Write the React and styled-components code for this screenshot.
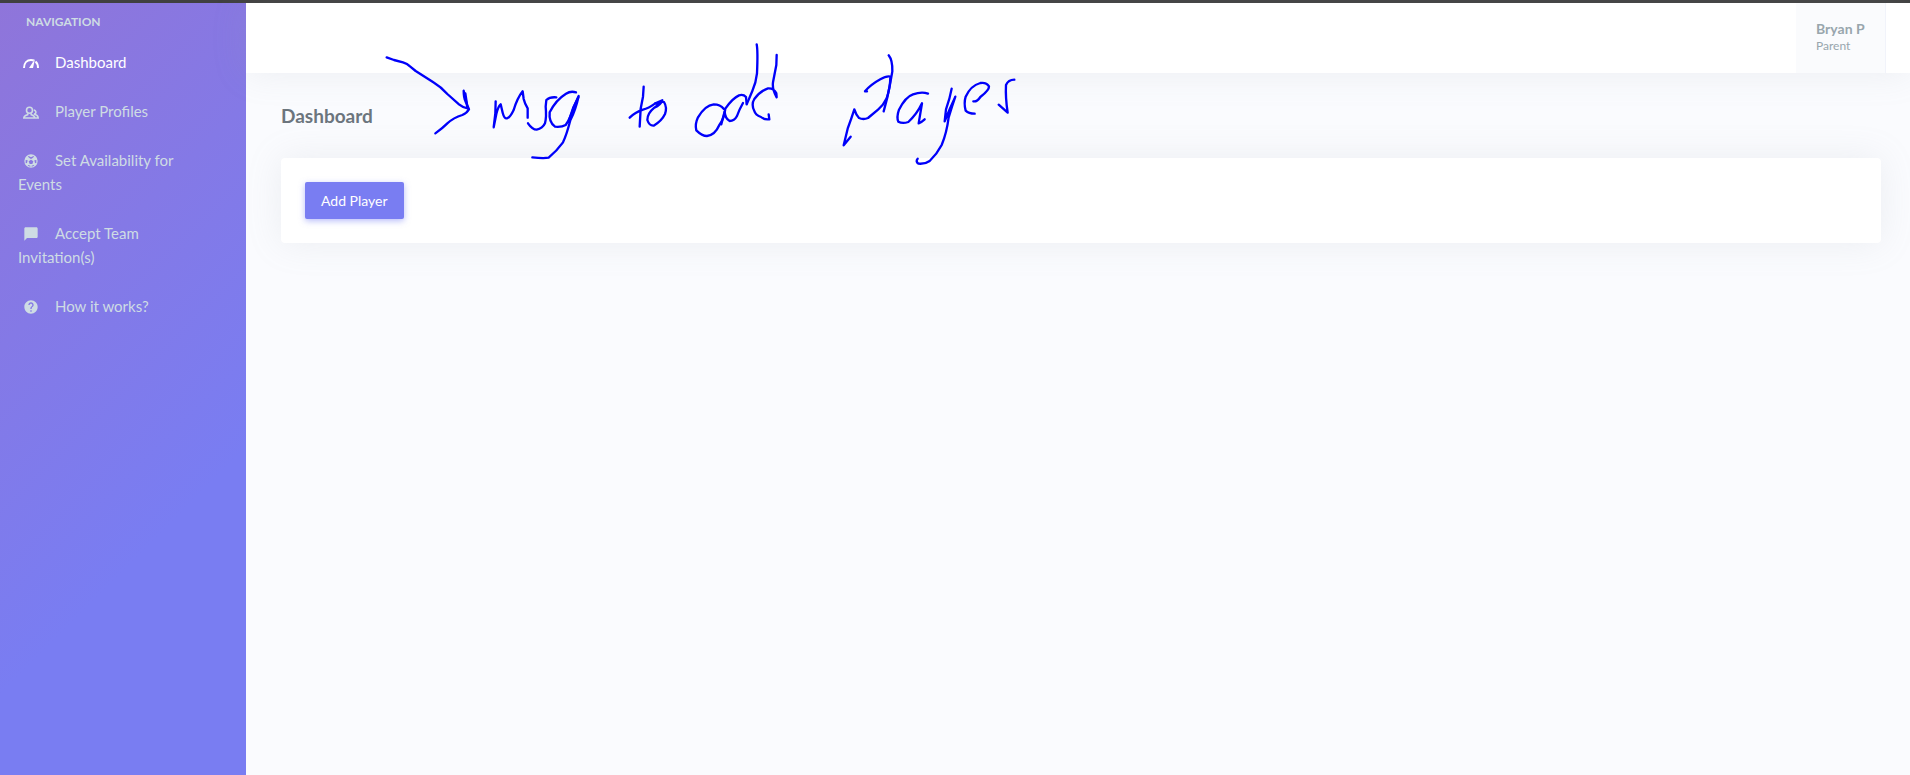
import React from "react";
import styled, { createGlobalStyle } from "styled-components";
import { MdChatBubble, MdHelp } from "react-icons/md";

const GlobalStyle = createGlobalStyle`
  * { box-sizing: border-box; }
  body {
    margin: 0;
    background: #fafbfe;
    color: #6c757d;
    font-family: Lato, "Open Sans", sans-serif;
    font-size: 14px;
    line-height: 20px;
  }
`;

const Page = styled.div`
  position: relative;
  display: flex;
  min-height: 100vh;
  border-top: 3px solid #404040;
`;

const Sidebar = styled.aside`
  flex: 0 0 246px;
  background: linear-gradient(135deg, #8f75da 0%, #797df2 68%);
`;

const NavTitle = styled.h2`
  margin: 0;
  padding: 11px 26px 10px;
  color: #cedce4;
  font-size: 12px;
  font-weight: 700;
  line-height: 16px;
  text-transform: uppercase;
`;

const NavList = styled.ul`
  margin: 0;
  padding: 0;
  list-style: none;
`;

const NavLink = styled.a`
  display: block;
  padding: 10px 30px 15px 18px;
  color: ${(p) => (p.$active ? "#fff" : "#cedce4")};
  font-size: 15px;
  line-height: 24px;
  text-decoration: none;

  svg {
    width: 16px;
    height: 16px;
    margin: 0 16px 0 5px;
    vertical-align: -3px;
  }
`;

const Main = styled.div`
  flex: 1;
  min-width: 0;
`;

const Topbar = styled.header`
  display: flex;
  justify-content: flex-end;
  height: 70px;
  padding-right: 24px;
  background: #fff;
  box-shadow: 0 0 35px 0 rgba(154, 161, 171, 0.15);
`;

const UserButton = styled.button`
  width: 90px;
  padding: 0 0 2px 20px;
  border: 0;
  border-right: 1px solid #f1f3fa;
  background: #fafbfd;
  color: #98a6ad;
  font-family: inherit;
  text-align: left;
`;

const UserName = styled.span`
  display: block;
  font-size: 14px;
  font-weight: 700;
  line-height: 18px;
`;

const UserRole = styled.span`
  display: block;
  font-size: 12px;
  line-height: 16px;
`;

const Content = styled.main`
  padding: 0 29px 0 35px;
`;

const Title = styled.h1`
  margin: 0;
  font-size: 19px;
  font-weight: 700;
  line-height: 85px;
`;

const Card = styled.section`
  padding: 24px;
  border-radius: 4px;
  background: #fff;
  box-shadow: 0 0 35px 0 rgba(154, 161, 171, 0.15);
`;

const PrimaryButton = styled.button`
  display: block;
  height: 37px;
  padding: 0 16px;
  border: 0;
  border-radius: 2px;
  background: #797df2;
  box-shadow: 0 2px 6px 0 rgba(114, 124, 245, 0.5);
  color: #fff;
  font-family: inherit;
  font-size: 14px;
`;

const Ink = styled.svg`
  position: absolute;
  top: 37px;
  left: 380px;
  width: 640px;
  height: 130px;
  pointer-events: none;
  fill: none;
  stroke: #0000fa;
  stroke-width: 7;
  stroke-linecap: round;
  stroke-linejoin: round;
`;

const GaugeIcon = () => (
  <svg viewBox="0 0 16 16" fill="none" stroke="currentColor" strokeWidth="2" aria-hidden="true">
    <path d="M1 13C1 8 4 5 8 5c1 0 2 .1 2.800.500M12.500 6.500C14.300 8 15 10 15 13" />
    <path d="M12 4L10 13H6z" fill="currentColor" stroke="none" />
  </svg>
);

const PlayersIcon = () => (
  <svg viewBox="0 0 16 16" fill="none" stroke="currentColor" strokeWidth="1.600" aria-hidden="true">
    <circle cx="6.500" cy="6.300" r="3" />
    <path d="M10.800 6.100a2.100 2.100 0 1 1 0 4.200" />
    <path d="M4.700 9.200v1.500C2.500 11.200 1 12 .8 14h11c-.2-2-1.600-2.800-3.600-3.300V9.200M11.500 10.300c2 .5 3.500 1.700 3.700 3.700h-4" />
  </svg>
);

const BallIcon = () => (
  <svg viewBox="0 0 24 24" fill="currentColor" fillRule="evenodd" aria-hidden="true">
    <path d="M12 2a10 10 0 1 0 0 20a10 10 0 0 0 0-20zM8.300 4.500L12 6.500l3.700-2l.8 1L13 8.500h-2L7.500 5.500zM12 10l-3.500 2.500L10 16.500h4l1.500-4zM4 10.500l3 .5l-1 4l-2 .5zM20 10.500l-3 .5l1 4l2 .5zM8 18l3 1v1.800l-4-1.500zM16 18l-3 1v1.800l4-1.500z" />
  </svg>
);

const items = [
  { label: "Dashboard", icon: GaugeIcon, active: true },
  { label: "Player Profiles", icon: PlayersIcon },
  { label: "Set Availability for Events", icon: BallIcon },
  { label: "Accept Team Invitation(s)", icon: MdChatBubble },
  { label: "How it works?", icon: MdHelp },
];

const HandwrittenNote = () => (
  <Ink viewBox="0 0 1920 390" role="img" aria-label="msg to add players">
    <g transform="translate(-30 -30)">
      <path d="M50 82L72 90L99 97Q112 101 120 109L137 123L190 157Q213 171 232 192L267 223Q279 233 293 235L281 182Q281 203 287 215L297 238Q292 248 277 255Q251 263 232 280Q217 295 196 310" />
      <path d="M286 190L292 230" />
      <path d="M377 214L376 250L371 292L379 252Q384 230 392 223L398 248Q403 267 411 265Q420 263 431 240Q442 204 458 184L461 207Q464 220 473 235V263" />
      <path d="M474 280Q487 299 500 299Q518 295 525 280Q530 260 527 230L529 210Q540 200 559 202" />
      <path d="M618 187Q602 182 588 191Q557 210 539 247Q536 276 555 290Q575 292 587 285Q601 265 610 235L626 198Q617 240 601 271Q590 314 579 337Q560 363 536 383Q520 386 487 382" />
      <path d="M625 202Q607 233 598 267" />
    </g>
    <g transform="translate(660 -30)">
      <path d="M131 170L129 200L122 236L119 290M89 263Q105 247 129 239Q145 235 166 220" />
      <path d="M166 220L187 211Q182 225 163 233Q142 250 142 270Q148 288 161 287Q185 273 195 252Q202 232 192 216Q180 211 168 230" />
      <path d="M371 236Q361 223 341 223Q315 226 294 262Q284 283 289 301Q306 318 321 318Q345 315 358 285Q373 265 376 236Q397 205 417 196Q430 192 438 201L440 223" />
      <path d="M364 283L374 244Q375 265 389 273Q403 273 411 258Q417 240 429 219" />
      <path d="M470 43Q474 62 471 130Q468 158 457 183L441 221" />
      <path d="M530 75L529 105L519 157Q516 177 530 202L529 190Q522 174 504 175Q480 183 463 207Q453 223 463 243Q466 255 483 261Q493 270 508 268L506 253" />
    </g>
    <g transform="translate(1350 -30)">
      <path d="M111 184H105Q122 164 151 148Q170 137 181 140Q181 172 170 205Q161 225 145 238L114 264Q100 270 87 264Q78 254 73 238Q65 263 53 296L41 346L62 320" />
      <path d="M176 76Q188 91 187 124Q181 161 172 202L161 244" />
      <path d="M294 191Q275 184 249 193Q226 201 207 239Q199 262 205 275Q217 282 235 276Q261 252 276 220L266 280Q273 278 284 268" />
      <path d="M365 176Q360 204 348 238L344 274Q358 238 376 200Q367 226 356 262Q350 309 335 345Q321 372 299 393Q285 403 265 401Q256 394 263 386" />
      <path d="M430 214Q441 216 451 201Q478 180 477 169Q469 156 451 159Q422 167 407 200Q401 220 407 242Q416 251 434 251" />
      <path d="M553 149Q535 149 528 165Q526 203 533 248L506 224" />
    </g>
  </Ink>
);

export default function App() {
  return (
    <>
      <GlobalStyle />
      <Page>
        <Sidebar>
          <NavTitle>Navigation</NavTitle>
          <nav aria-label="Main">
            <NavList>
              {items.map(({ label, icon: Icon, active }) => (
                <li key={label}>
                  <NavLink href="#" $active={active} aria-current={active ? "page" : undefined}>
                    <Icon />
                    {label}
                  </NavLink>
                </li>
              ))}
            </NavList>
          </nav>
        </Sidebar>
        <Main>
          <Topbar>
            <UserButton type="button">
              <UserName>Bryan P</UserName>
              <UserRole>Parent</UserRole>
            </UserButton>
          </Topbar>
          <Content>
            <Title>Dashboard</Title>
            <Card>
              <PrimaryButton type="button">Add Player</PrimaryButton>
            </Card>
          </Content>
        </Main>
        <HandwrittenNote />
      </Page>
    </>
  );
}
